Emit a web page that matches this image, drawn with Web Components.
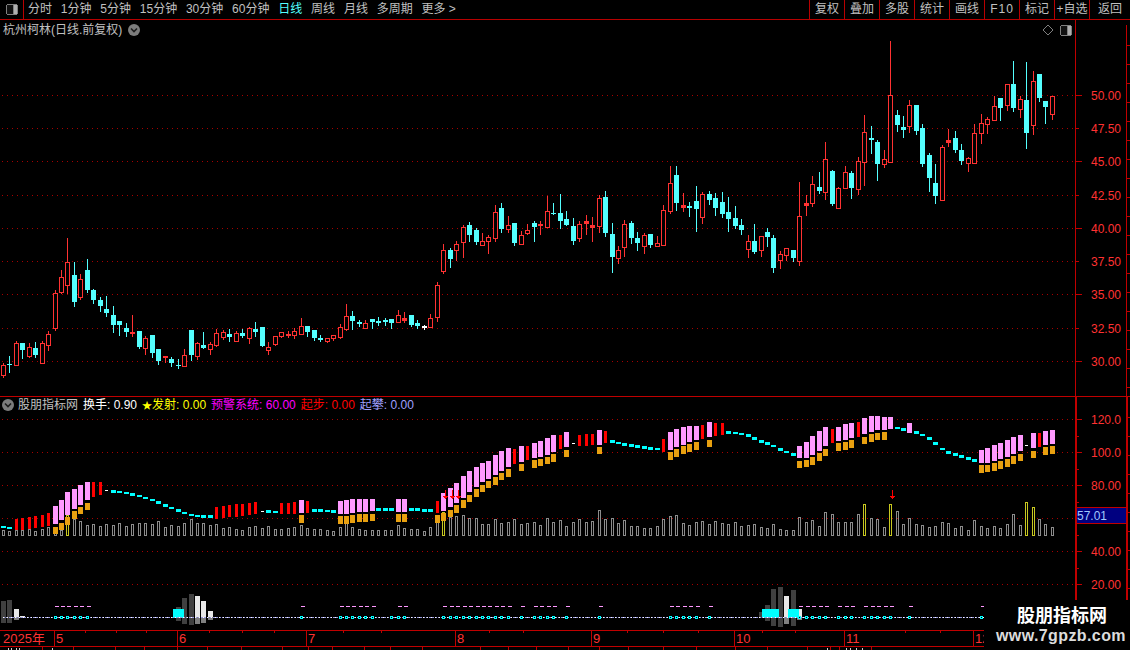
<!DOCTYPE html>
<html lang="zh">
<head>
<meta charset="utf-8">
<title>K线</title>
<style>
  html, body { margin: 0; background: #000; }
  body { font: 12px "Liberation Sans", "Noto Sans CJK SC", sans-serif; color: #c0c0c0; }
</style>
</head>
<body>
<stock-terminal>
  <top-bar slot="top">
    <period-tab>分时</period-tab>
    <period-tab>1分钟</period-tab>
    <period-tab>5分钟</period-tab>
    <period-tab>15分钟</period-tab>
    <period-tab>30分钟</period-tab>
    <period-tab>60分钟</period-tab>
    <period-tab active>日线</period-tab>
    <period-tab>周线</period-tab>
    <period-tab>月线</period-tab>
    <period-tab>多周期</period-tab>
    <period-tab>更多 &gt;</period-tab>
    <tool-button slot="tools">复权</tool-button>
    <tool-button slot="tools">叠加</tool-button>
    <tool-button slot="tools">多股</tool-button>
    <tool-button slot="tools">统计</tool-button>
    <tool-button slot="tools">画线</tool-button>
    <tool-button slot="tools" spaced>F10</tool-button>
    <tool-button slot="tools">标记</tool-button>
    <tool-button slot="tools">+自选</tool-button>
    <tool-button slot="tools" wide>返回</tool-button>
  </top-bar>
  <kline-pane slot="main">
    <chart-legend slot="legend">
      <legend-item>杭州柯林(日线.前复权)</legend-item>
      <round-chevron></round-chevron>
    </chart-legend>
  </kline-pane>
  <indicator-pane slot="lower">
    <chart-legend slot="legend" tight>
      <round-chevron style="margin-right:-1px"></round-chevron>
      <legend-item>股朋指标网</legend-item>
      <legend-item style="color:#fff">换手: 0.90</legend-item>
      <legend-item style="color:#ff0"><span style="font-size:10px">★</span>发射: 0.00</legend-item>
      <legend-item style="color:#f0f">预警系统: 60.00</legend-item>
      <legend-item style="color:#f00">起步: 0.00</legend-item>
      <legend-item style="color:#a0a0ff">起攀: 0.00</legend-item>
    </chart-legend>
  </indicator-pane>
  <time-axis slot="axis"></time-axis>
  <water-mark slot="mark"></water-mark>
</stock-terminal>

<script>
// candles read off the screenshot at 3x: type top,bottom,high,low
const CANDLE_ROWS = [
  [230, `R405,435,400,441 C401,404,378,426 R340,404,334,404 C339,360,339,384 R351,378,339,381 C354,375,336,381 R340,398,334,399 R312,345,303,360
    R190,293,181,300 R142,186,120,189 R97,164,24,190 C135,216,96,228 R148,201,132,207 C120,180,87,186 C180,210,177,219 C210,228,201,243
    C237,249,198,258 C255,285,228,306 C273,285,273,315 C294,306,279,318 R306,309,255,318 C303,351,303,354 R324,354,318,372 C315,369,315,381
    C357,393,357,402 R379,382,378,396 C387,399,381,408 C405,408,387,414 R376,408,357,408 C300,375,300,390 R340,378,336,387 C345,354,306,354
    R343,357,336,372 R309,345,297,348 R306,321,300,327 C312,321,297,333 R309,333,303,333 C309,318,297,321 R294,324,291,339 C297,306,276,318
    C291,348,291,348 R351,359,336,372 R318,342,318,345`],
  [170, `R486,498,486,501 R492,495,483,501 R484,495,474,504 R468,492,444,492 C468,486,468,498 C480,504,480,510 C504,510,495,513 R504,512,504,516
    R496,504,496,510 R472,500,463,504 R439,477,402,480 C438,453,423,477 C456,462,450,468 R460,473,450,473 C447,456,447,474 C453,459,441,465
    C450,456,444,465 C447,459,447,474 R435,455,420,455 R445,449,426,456 C435,465,435,468 C459,468,450,474 W469,471,465,477 R445,470,432,470
    R346,440,336,453 R240,302,222,309 C240,267,234,291 R222,240,213,270 R171,215,165,261 C165,195,156,213 C180,216,174,222 R213,225,189,225
    R201,213,195,249 R127,204,105,213 C114,177,99,186 R166,177,138,186 C159,219,159,225 R195,222,183,222 R181,189,162,192 C159,171,153,213
    R162,165,153,192 R124,171,78,171 C129,132,99,132`],
  [150, `C189,213,132,234 C207,225,183,225 C228,273,204,282 R222,264,213,273 R213,218,195,252 R226,231,201,273 R145,228,135,246 C141,249,123,258
    C252,321,219,366 R301,324,288,339 R222,291,210,318 C219,264,213,279 C264,279,246,300 R255,288,249,309 C252,285,252,291 R279,288,258,288
    R181,285,165,285 R100,183,48,189 C75,159,48,180 R165,171,129,183 C168,174,156,198 C153,177,108,243 R132,201,126,219 C132,150,123,162
    C144,174,129,195 C156,192,126,201 C186,207,141,243 C204,228,168,234 C225,240,207,252 R273,297,255,321 C273,306,222,309 R259,300,258,318
    C246,261,234,288 C264,354,255,366 R312,330,303,354 R294,315,294,330 C300,324,300,333 R198,332,96,345`],
  [35, `R505,511,480,540 R448,503,423,513 C457,468,411,474 R373,470,321,491 C408,507,405,510 R460,520,455,520 R412,458,393,458 C415,459,408,489
    R379,461,366,477 R292,380,240,450 C309,315,273,354 C321,387,315,435 R373,386,345,396 R181,380,18,380 C240,270,225,288 C276,285,243,306
    R210,272,195,291 C210,288,210,297 C279,387,267,393 C360,429,354,468 C444,483,387,504 R337,494,330,494 R316,320,282,333 C309,345,288,351
    C345,378,327,387 R370,383,366,408 R295,383,267,383 R265,293,237,324 R253,266,246,294 R214,254,183,254 C189,219,189,255 R148,211,148,225
    C147,219,78,228 R193,221,183,246 C195,294,81,339 R139,269,108,297 C117,189,117,198 C198,216,198,264 R184,236,184,252`]
];

// volume column tops at 3x: offset, baseline and tops; y marks the yellow ones
const VOLUME_ROWS = [
  [395, `405 408 404 405 402 408 402 396 395 405 y360 372 378 390 388 394 388 390 385 394 388 385 385 388 378 397 390 394 385 373 385 385 390 388
    400 397 403 405 397 393 400 394 403 403 400 396 390 400 403 403 406 409 397 385 397 403 405 404 406 405 405 391 400 403 403`],
  [420, `333 322 290 y275 290 289 285 294 294 313 312 297 309 306 297 312 309 306 315 294 306 300 318 306 297 306 303 270 297 294 309 300 318 318
    324 324 318 297 288 285 309 315 306 303 312 303`],
  [400, `370 372 367 379 375 373 382 385 373 388 391 390 352 367 361 379 337 343 367 367 367 343 y313 355 358 382 y313 334 373 355 373 376 382 379
    367 370 385 379 391 361 379 385 379 385 373 343 376 y307 y322 358 373 382`]
];

// ribbon over the volume: c cyan, w white, r red, p pink with orange under it
const RIBBON_ROWS = [
  [395, `c393,399 c396,402 r372,405 r369,405 r366,402 r363,399 r360,396 r354,393 p333,387,396,417 p315,375,384,405 p291,360,366,390
    p282,342,348,372 p270,330,336,357 p261,315,324,345 r261,306 r261,300 w285,288 c285,294 c288,294 c291,297 c294,303 c300,306 c306,312
    c312,318 c318,327 c327,336 c336,342 c342,351 c351,357 c357,363 c360,366 c360,369 c360,369 r336,372 r333,369 r330,366 r327,366 r327,363
    r324,360 r321,358 w348,351 c345,354 c348,354 r324,357 r324,357 r321,357 p315,354,360,384 r318,354 c342,351 c342,351 c345,351 c345,354
    p318,357,363,387 p315,357,363,387 p312,354,360,384 p312,351,357,381 p312,351,357,381 p312,348,357,378 c339,348 c339,348 c339,348
    p312,351,357,381 p312,351,357,381 c339,348 c339,348`],
  [420, `c267,276 c267,276 r243,279,285,309 p219,273,279,303 p204,261,270,291 p189,249,255,279 p168,234,240,264 p153,216,225,246 p141,201,207,231
    p129,186,195,216 p123,177,183,204 p105,165,171,195 p93,153,159,180 p84,141,147,171 r87,132 p78,126,132,153 r78,120 p69,114,120,144
    p63,111,117,138 p54,105,111,132 p45,96,102,126 r45,87 p36,81,90,111 w69,72 r45,78 r42,78 r42,75 p30,75,81,102 r33,69 c60,69 c66,72
    c69,78 c72,81 c75,84 c78,87 c81,90 c84,90 r57,96 p36,90,96,120 p27,81,87,111 p21,75,78,102 p18,66,72,96 p18,60,66,90 r15,57 p6,51,60,81
    r9,48`],
  [400, `r69,105 c93,102 c96,102 c99,105 c102,111 c111,120 c120,129 c126,135 c135,141 c144,153 c153,159 c159,168 p138,174,183,204 p126,174,180,201
    p108,165,171,195 p93,153,159,183 p81,138,147,168 r87,129 p81,123,129,153 p72,120,126,150 p69,114,120,144 r66,111 p54,102,111,132
    p48,96,102,126 p48,90,99,120 p51,90,96,120 p51,87 c81,87 c84,93 p69,99 c93,102 c102,108 c111,120 c126,135 c144,150 c153,162 c159,168
    c165,174 c171,180 c177,186 p150,189,195,219 p144,189,195,216 p135,183,189,213 p129,177,183,207 p120,171,177,201 p111,162,168,192
    p105,153,162,183 w135,138 p99,144,153,174 r99,141 p93,135,141,165 p90,132,138,162`]
];

const RED = "#ff3232";
const CANDLE_CYAN = "#54ffff";
const candleX = (i) => Math.floor(3.2 + i * 6.477);
const px = (n) => Math.round(n / 3);
const tokens = (text) => text.trim().split(/\s+/);

function rect(x, y, w, h, fill) {
  return `<rect x="${x}" y="${y}" width="${w}" height="${h}" fill="${fill}"/>`;
}

function gridLines(ys, right) {
  return ys.map((y) => `<line x1="2" x2="${right}" y1="${y + 0.5}" y2="${y + 0.5}" stroke="#a80000" stroke-dasharray="1 4"/>`).join("");
}

function axisLabels(labels) {
  return labels.map(([y, text, short]) => `<text x="1091" y="${y + 4.5}" fill="${RED}" font-size="12">${text}</text>`
    + rect(1075, y, short ? 4 : 7, 1, "#c00000")).join("");
}

// second scale at the far right edge, ticks only
function outerScale(from, to, lineWidth) {
  let out = rect(1126, from, lineWidth, to - from, "#c00000");
  for (let y = from + 20; y < to; y += 19) out += rect(1126, y, 4, 1, "#c00000");
  return out;
}

function candleSvg() {
  let out = "";
  let i = 0;
  for (const [top, text] of CANDLE_ROWS) {
    for (const token of tokens(text)) {
      const kind = token[0];
      const [a, b, hi, lo] = token.slice(1).split(",").map((n) => top + px(Number(n)));
      const x = candleX(i++);
      const color = kind === "R" ? RED : kind === "W" ? "#fff" : CANDLE_CYAN;
      out += rect(x, hi, 1, lo - hi + 1, color);
      if (kind === "R" && b - a > 2) {
        out += `<rect x="${x - 1.5}" y="${a + 0.5}" width="4" height="${b - a}" fill="#000" stroke="${color}"/>`;
      } else {
        out += rect(x - 2, a, 5, Math.max(b - a, 1) + (kind === "C" ? 0 : 1), color);
      }
    }
  }
  return out;
}

function volumeSvg() {
  const bottom = 536;
  let out = "";
  let i = 0;
  for (const [top, text] of VOLUME_ROWS) {
    for (const token of tokens(text)) {
      const yellow = token[0] === "y";
      const y = top + px(Number(yellow ? token.slice(1) : token));
      const x = candleX(i++);
      out += `<rect x="${x - 0.5}" y="${y + 0.5}" width="2" height="${bottom - y - 1}" fill="none" stroke="${yellow ? "#c8c820" : "#8c8c8c"}"/>`;
    }
  }
  return out;
}

function ribbonSvg() {
  const colors = { c: "#00ffff", w: "#fff", r: "#f00", p: "#ff99ff" };
  const marked = [60];
  let out = "";
  let i = 0;
  for (const [top, text] of RIBBON_ROWS) {
    for (const token of tokens(text)) {
      const kind = token[0];
      const [a, b, c, d] = token.slice(1).split(",").map((n) => top + px(Number(n)));
      const x = candleX(i);
      if (kind === "r") out += rect(x - 1, a, 3, b - a, colors.r);
      else if (kind === "w") out += rect(x - 1, a, 3, 1, colors.w);
      else out += rect(x - 2, a, 5, b - a, colors[kind]);
      if (c) out += rect(x - 2, c, 5, d - c, "#e8a010");
      if (kind === "p") marked.push(i);
      i++;
    }
  }
  return { bars: out, marked };
}

function signalSvg(marked) {
  const y = 617;
  let out = "";
  const hist = [
    [0, 183, 249, "#404040"], [1, 180, 249, "#404040"], [2, 207, 240, "w"], [3, 228, 233, "w"],
    [27, 201, 243, "#404040"], [28, 174, 252, "#404040"], [29, 162, 255, "#404040"],
    [30, 168, 252, "w"], [31, 183, 249, "w"], [32, 213, 240, "w"]
  ];
  for (const [i, a, b, color] of hist) {
    const x = candleX(i), top = 540 + px(a), end = 540 + px(b);
    if (color === "w") {
      out += rect(x - 2, top, 5, y - top, "#e8e8e8") + rect(x - 2, y, 5, end - y, "#808080");
    } else {
      out += rect(x - 2, top, 5, end - top, color);
    }
  }
  const hist2 = [[117, 636, 655, "#404040"], [118, 615, 662, "#404040"], [119, 567, 678, "#404040"], [120, 561, 681, "#404040"],
    [121, 588, 672, "w"], [122, 570, 678, "#404040"], [123, 628, 660, "w"]];
  for (const [i, a, b, color] of hist2) {
    const x = candleX(i), top = 400 + px(a), end = 400 + px(b);
    if (color === "w") {
      out += rect(x - 2, top, 5, y - top, "#e8e8e8") + rect(x - 2, y, 5, end - y, "#808080");
    } else {
      out += rect(x - 2, top, 5, end - top, color);
    }
  }
  out += rect(173, 609, 11, 9, "#0ff") + rect(762, 609, 17, 9, "#0ff") + rect(788, 609, 11, 9, "#0ff");
  out += `<line x1="3" x2="1054" y1="${y + 0.5}" y2="${y + 0.5}" stroke="#9a9ae0" stroke-dasharray="2 1"/>`;
  out += `<line x1="3" x2="1054" y1="${y + 0.5}" y2="${y + 0.5}" stroke="#fff" stroke-dasharray="1 3"/>`;
  for (const i of marked) {
    const x = candleX(i);
    out += `<rect x="${x - 0.5}" y="${y - 0.5}" width="2" height="2" fill="#000" stroke="#0ff"/>`;
    if (i !== 60) out += rect(x, 606, 4, 1, "#ff99ff");
  }
  return out;
}

function redArrow(x) {
  return rect(x, 490, 1, 9, "#f00") + rect(x - 2, 496, 5, 1, "#f00") + rect(x - 1, 497, 3, 1, "#f00");
}

class StockTerminal extends HTMLElement {
  constructor() {
    super();
    this.attachShadow({ mode: "open" });
    this.shadowRoot.innerHTML = `
      <style>
        :host { display: flex; flex-direction: column; position: relative; width: 1130px; height: 650px; overflow: hidden; background: #000; }
      </style>
      <slot name="top"></slot>
      <slot name="main"></slot>
      <slot name="lower"></slot>
      <slot name="axis"></slot>
      <slot name="mark"></slot>
    `;
  }
}

class TopBar extends HTMLElement {
  constructor() {
    super();
    this.attachShadow({ mode: "open" });
    this.shadowRoot.innerHTML = `
      <style>
        :host { display: flex; height: 19px; border-bottom: 1px solid #b80000; flex: none; }
        .switch { width: 23px; border-right: 1px solid #b80000; display: flex; align-items: center; justify-content: center; }
        .tabs { display: flex; align-items: center; gap: 8.8px; padding-left: 4px; flex: 1; }
        .tools { display: flex; }
      </style>
      <div class="switch"><panel-icon></panel-icon></div>
      <div class="tabs"><slot></slot></div>
      <div class="tools"><slot name="tools"></slot></div>
    `;
  }
}

class PeriodTab extends HTMLElement {
  constructor() {
    super();
    this.attachShadow({ mode: "open" });
    this.shadowRoot.innerHTML = `
      <style>
        :host { display: block; line-height: 19px; white-space: nowrap; color: #c0c0c0; }
        :host([active]) { color: #54ffff; }
      </style>
      <slot></slot>
    `;
  }
}

class ToolButton extends HTMLElement {
  constructor() {
    super();
    this.attachShadow({ mode: "open" });
    this.shadowRoot.innerHTML = `
      <style>
        :host { display: block; width: 34px; border-left: 1px solid #b80000; text-align: center; line-height: 19px; color: #c0c0c0; white-space: nowrap; }
        :host([wide]) { width: 40px; }
        :host([spaced]) { letter-spacing: 1px; }
      </style>
      <slot></slot>
    `;
  }
}

class PanelIcon extends HTMLElement {
  constructor() {
    super();
    this.attachShadow({ mode: "open" });
    this.shadowRoot.innerHTML = `
      <style>:host { display: block; width: 12px; height: 11px; } svg { display: block; }</style>
      <svg width="12" height="11" viewBox="0 0 12 11" shape-rendering="crispEdges">
        <path d="M1 0h10v1h1v9h-1v1H1v-1H0V1h1z" fill="#808080"/>
        <rect x="1" y="1" width="6" height="9" fill="#111"/>
        <rect x="8" y="1" width="3" height="9" fill="#b0b0b0"/>
      </svg>
    `;
  }
}

class RoundChevron extends HTMLElement {
  constructor() {
    super();
    this.attachShadow({ mode: "open" });
    this.shadowRoot.innerHTML = `
      <style>:host { display: block; width: 12px; height: 12px; flex: none; } svg { display: block; }</style>
      <svg width="12" height="12" viewBox="0 0 12 12">
        <circle cx="6" cy="6" r="6" fill="#7c7c7c"/>
        <path d="M3 4.5 6 7.5 9 4.5" fill="none" stroke="#1c1c1c" stroke-width="1.6"/>
      </svg>
    `;
  }
}

class ChartLegend extends HTMLElement {
  constructor() {
    super();
    this.attachShadow({ mode: "open" });
    this.shadowRoot.innerHTML = `
      <style>
        :host { position: absolute; left: 3px; top: 3px; display: flex; align-items: center; gap: 6px; height: 14px; white-space: nowrap; }
        :host([tight]) { left: 2px; top: 1px; gap: 5px; }
      </style>
      <slot></slot>
    `;
  }
}

class LegendItem extends HTMLElement {
  constructor() {
    super();
    this.attachShadow({ mode: "open" });
    this.shadowRoot.innerHTML = `
      <style>:host { display: block; line-height: 14px; }</style>
      <slot></slot>
    `;
  }
}

class KlinePane extends HTMLElement {
  constructor() {
    super();
    this.attachShadow({ mode: "open" });
    const ys = [95, 128, 161, 195, 228, 261, 294, 328, 361];
    const labels = ["50.00", "47.50", "45.00", "42.50", "40.00", "37.50", "35.00", "32.50", "30.00"].map((t, n) => [ys[n], t, n % 2 === 1]);
    this.shadowRoot.innerHTML = `
      <style>
        :host { display: block; position: relative; height: 376px; border-bottom: 1px solid #c00000; flex: none; }
        svg { display: block; }
        .corner { position: absolute; top: 4px; right: 58px; display: flex; gap: 6px; align-items: center; }
      </style>
      <svg width="1130" height="376" viewBox="0 20 1130 376" shape-rendering="crispEdges">
        ${gridLines(ys, 1074)}
        ${candleSvg()}
        ${rect(1075, 20, 1, 376, "#c00000")}
        ${axisLabels(labels)}
        ${outerScale(25, 396, 1)}
      </svg>
      <slot name="legend"></slot>
      <div class="corner">
        <svg width="12" height="12" viewBox="0 0 12 12"><path d="M6 1 11 6 6 11 1 6z" fill="none" stroke="#808080"/></svg>
        <panel-icon></panel-icon>
      </div>
    `;
  }
}

class IndicatorPane extends HTMLElement {
  constructor() {
    super();
    this.attachShadow({ mode: "open" });
    const { bars, marked } = ribbonSvg();
    const ys = [419, 452, 485, 518, 551, 584];
    const labels = [[419, "120.0"], [452, "100.0"], [485, "80.00"], [551, "40.00"], [584, "20.00"]];
    let minor = "";
    for (const y of ys) minor += rect(1075, y + 17, 4, 1, "#c00000");
    this.shadowRoot.innerHTML = `
      <style>
        :host { display: block; position: relative; height: 233px; flex: none; }
        svg { display: block; }
      </style>
      <svg width="1130" height="233" viewBox="0 397 1130 233" shape-rendering="crispEdges">
        ${gridLines(ys, 1074)}
        ${volumeSvg()}
        ${bars}
        ${[445, 452, 458, 892].map(redArrow).join("")}
        ${signalSvg(marked)}
        ${rect(1075, 397, 2, 233, "#c00000")}
        ${minor}
        ${axisLabels(labels)}
        ${outerScale(397, 630, 2)}
        ${rect(1077, 507, 49, 16, "#000080")}
        ${rect(1077, 507, 49, 1, "#c00000")}
        ${rect(1077, 523, 49, 1, "#c00000")}
        <text x="1077" y="519.5" fill="#a0c8ff" font-size="12">57.01</text>
      </svg>
      <slot name="legend"></slot>
    `;
  }
}

class TimeAxis extends HTMLElement {
  constructor() {
    super();
    this.attachShadow({ mode: "open" });
    const months = [[54, "5"], [177, "6"], [306, "7"], [455, "8"], [591, "9"], [734, "10"], [844, "11"], [973, "12"]];
    const small = [85, 116, 146, 209, 242, 274, 343, 381, 489, 523, 627, 663, 698, 762, 795, 905, 940];
    const tabs = [42, 73, 115, 144, 177, 207, 241, 282, 308, 332, 364, 390, 422, 480, 508, 536, 568, 599, 628, 663, 696, 735, 767, 807, 830, 839, 871];
    const peeks = [8, 11, 16, 19, 52, 827, 846, 850, 856, 862];
    this.shadowRoot.innerHTML = `
      <style>
        :host { display: block; height: 20px; flex: none; }
        svg { display: block; }
      </style>
      <svg width="1130" height="20" viewBox="0 630 1130 20" shape-rendering="crispEdges">
        ${rect(0, 630, 1130, 1, "#c00000")}
        ${rect(0, 646, 1130, 1, "#c00000")}
        <text x="3" y="643" fill="${RED}" font-size="13">2025年</text>
        ${months.map(([x, t]) => rect(x, 630, 1, 16, "#c00000") + `<text x="${x + 2}" y="643" fill="${RED}" font-size="13">${t}</text>`).join("")}
        ${small.map((x) => rect(x, 631, 1, 2, "#c00000")).join("")}
        ${tabs.map((x) => rect(x, 647, 1, 3, "#c00000")).join("")}
        ${peeks.map((x) => rect(x, 648, 1, 2, "#d0d0d0")).join("")}
      </svg>
    `;
  }
}

class WaterMark extends HTMLElement {
  constructor() {
    super();
    this.attachShadow({ mode: "open" });
    this.shadowRoot.innerHTML = `
      <style>
        :host { position: absolute; right: 0; bottom: 0; width: 146px; height: 50px; background: #000; display: flex; flex-direction: column; align-items: center; padding-top: 2px; box-sizing: border-box; }
        .name { font: bold 18px/24px "Noto Sans CJK SC", sans-serif; color: #fff; padding-left: 10px; }
        .site { font: bold 16px/19px "Liberation Sans", sans-serif; color: #dcdcdc; letter-spacing: 0.4px; padding-left: 8px; }
      </style>
      <div class="name">股朋指标网</div>
      <div class="site">www.7gpzb.com</div>
    `;
  }
}

customElements.define("stock-terminal", StockTerminal);
customElements.define("top-bar", TopBar);
customElements.define("period-tab", PeriodTab);
customElements.define("tool-button", ToolButton);
customElements.define("panel-icon", PanelIcon);
customElements.define("round-chevron", RoundChevron);
customElements.define("chart-legend", ChartLegend);
customElements.define("legend-item", LegendItem);
customElements.define("kline-pane", KlinePane);
customElements.define("indicator-pane", IndicatorPane);
customElements.define("time-axis", TimeAxis);
customElements.define("water-mark", WaterMark);
</script>
</body>
</html>
